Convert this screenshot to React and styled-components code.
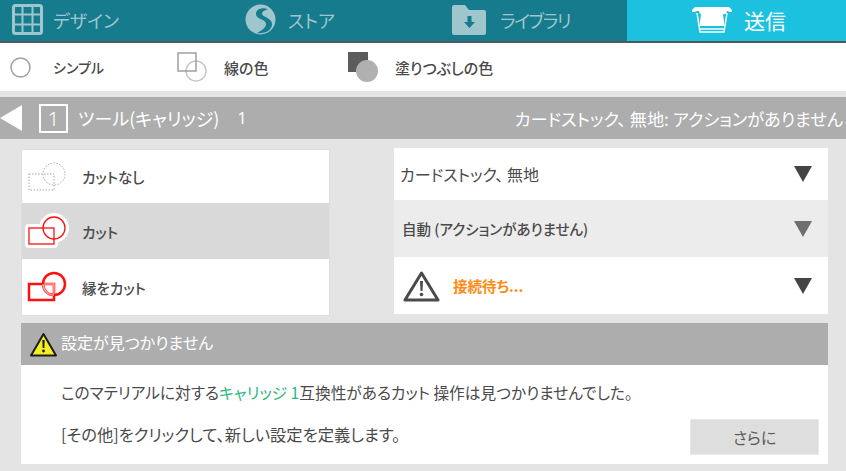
import React from "react"
import styled, { createGlobalStyle } from "styled-components"

const GlobalStyle = createGlobalStyle`
  html, body {
    margin: 0;
    padding: 0;
    background-color: #e4e4e4;
  }

  * {
    box-sizing: border-box;
  }
`

const Page = styled.div`
  width: 846px;
  height: 471px;
  overflow: hidden;
  background-color: #e4e4e4;
  color: #4a4a4a;
  font-family: "Noto Sans CJK JP", "Noto Sans", sans-serif;
  font-feature-settings: "palt";
`

const Tabs = styled.nav`
  display: grid;
  grid-template-columns: 209px 209px 209px 1fr;
  height: 43px;
  background-color: #157b8d;
  border-bottom: 2px solid #4c5a5e;
`

const Tab = styled.div`
  display: flex;
  align-items: center;
  gap: ${({ $gap }) => $gap}px;
  padding-left: ${({ $pad }) => $pad}px;
  padding-bottom: 2px;
  font-size: ${({ $active }) => ($active ? 21 : 18)}px;
  letter-spacing: ${({ $tight }) => ($tight ? "-1.5px" : "0")};
  color: ${({ $active }) => ($active ? "#ffffff" : "#9fc6cd")};
  background-color: ${({ $active }) => ($active ? "#1dc1e0" : "transparent")};
`

const OptionBar = styled.div`
  display: flex;
  align-items: center;
  height: 48px;
  padding-left: 10px;
  background-color: #ffffff;
`

const Option = styled.div`
  display: flex;
  align-items: center;
  gap: ${({ $gap }) => $gap}px;
  width: ${({ $width }) => $width}px;
  font-size: ${({ $size }) => $size}px;
  font-weight: 500;
`

const ToolBar = styled.div`
  display: flex;
  align-items: center;
  height: 42px;
  margin-top: 6px;
  background-color: #adadad;
  color: #ffffff;
  font-size: 18px;
`

const BackArrow = styled.div`
  width: 0;
  height: 0;
  border-style: solid;
  border-width: 13px 22px 13px 0;
  border-color: transparent #ffffff transparent transparent;
`

const ToolNumber = styled.div`
  display: flex;
  align-items: center;
  justify-content: center;
  width: 29px;
  height: 29px;
  margin: 0 10px 0 17px;
  border: 2px solid #ffffff;
  font-family: "Noto Sans", sans-serif;
  font-size: 20px;
  font-weight: 300;
`

const ToolCount = styled.span`
  margin-left: 18px;
  font-family: "Noto Sans", sans-serif;
  font-size: 16px;
`

const ToolStatus = styled.span`
  margin-left: auto;
  padding-right: 3px;
  font-size: 17.2px;
`

const Columns = styled.div`
  display: flex;
  justify-content: space-between;
  align-items: flex-start;
  padding: 9px 18px 0 21px;
`

const CutList = styled.div`
  width: 309px;
  height: 167px;
  margin-top: 1px;
  background-color: #ffffff;
  border: 1px solid #dedede;
`

const CutRow = styled.div`
  display: flex;
  align-items: center;
  gap: 13px;
  height: ${({ $height }) => $height}px;
  padding-left: 3px;
  font-size: 14.5px;
  font-weight: 500;
  background-color: ${({ $selected }) => ($selected ? "#d9d9d9" : "#ffffff")};
`

const Settings = styled.div`
  width: 434px;
`

const SettingRow = styled.div`
  display: flex;
  align-items: center;
  height: ${({ $height }) => $height}px;
  padding: 0 16px 0 ${({ $pad }) => $pad}px;
  font-size: ${({ $size }) => $size}px;
  font-weight: ${({ $weight }) => $weight};
  background-color: ${({ $muted }) => ($muted ? "#ececec" : "#ffffff")};
`

const Caret = styled.div`
  width: 0;
  height: 0;
  margin-left: auto;
  border-style: solid;
  border-width: 16px 9.5px 0 9.5px;
  border-color: ${({ $muted }) => ($muted ? "#6f6f6f" : "#444444")} transparent transparent transparent;
`

const Waiting = styled.span`
  margin-left: 13px;
  color: #ff8a14;
  font-weight: 700;
  font-size: 14.5px;
`

const Warning = styled.section`
  width: 807px;
  margin: 7px 0 0 21px;
  background-color: #ffffff;
`

const WarningHead = styled.div`
  display: flex;
  align-items: center;
  gap: 4px;
  height: 42px;
  padding-left: 9px;
  background-color: #adadad;
  color: #ffffff;
  font-size: 16px;
`

const WarningTitle = styled.span`
  margin-bottom: 4px;
`

const WarningBody = styled.div`
  display: flex;
  justify-content: space-between;
  align-items: flex-end;
  height: 99px;
  padding: 0 9px 9px 40px;
`

const Messages = styled.div`
  display: flex;
  flex-direction: column;
  gap: 19px;
  padding-bottom: 10px;
`

const Message = styled.p`
  margin: 0;
  line-height: 22px;
  font-size: ${({ $size }) => $size}px;
`

const Highlight = styled.span`
  color: #2cb87c;
`

const MoreButton = styled.button`
  width: 129px;
  height: 36px;
  padding: 0;
  border: 1px solid #e8e8e8;
  background-color: #dedede;
  color: #5a5a5a;
  font-family: inherit;
  font-feature-settings: inherit;
  font-size: 16px;
`

function GridIcon() {
  return (
    <svg width="31" height="31" viewBox="0 0 31 31" fill="none" stroke="#9fc6cd">
      <rect x="1.5" y="1.5" width="28" height="28" rx="2" strokeWidth="3" />
      <path d="M10.5 2v27M20.5 2v27M2 10.5h27M2 20.5h27" strokeWidth="2" />
    </svg>
  )
}

function StoreIcon() {
  return (
    <svg width="31" height="31" viewBox="0 0 31 31">
      <circle cx="15.5" cy="15.5" r="15" fill="#9fc6cd" />
      <path
        d="M23 5c-6-2-12 0-12 5 0 5.500 10 5 10 10 0 4-5 7-9 9 7 1 15-2 15-9 0-6.500-10-6.500-10-10.500 0-2 3-3 6-4.500z"
        fill="#157b8d"
      />
    </svg>
  )
}

function LibraryIcon() {
  return (
    <svg width="35" height="32" viewBox="0 0 35 32">
      <path
        d="M2 1h11l4 5h15a2 2 0 0 1 2 2v21a2 2 0 0 1-2 2H2a2 2 0 0 1-2-2V3a2 2 0 0 1 2-2z"
        fill="#9fc6cd"
      />
      <path d="M15.500 12h4v6h3.500l-5.500 6-5.500-6h3.500z" fill="#157b8d" />
    </svg>
  )
}

function SendIcon() {
  return (
    <svg width="42" height="28" viewBox="0 0 42 28" fill="none">
      <path d="M6 1h30c3 0 5 2 5 5h-3c0-1-1-1-2-1l-1 3H9L8 5C7 5 4 5 4 6H1c0-3 2-5 5-5z" fill="#ffffff" />
      <path d="M10 8h22l1.500 12h-25z" fill="#ffffff" />
      <path d="M6 7l3 19h24l3-19" stroke="#ffffff" strokeWidth="1.500" />
      <path d="M8 23h26" stroke="#ffffff" strokeWidth="1.500" />
    </svg>
  )
}

function LineColorIcon() {
  return (
    <svg width="30" height="30" viewBox="0 0 30 30" fill="none">
      <circle cx="19" cy="19" r="10" stroke="#c8c8c8" strokeWidth="1.500" />
      <rect x="1" y="1" width="18" height="18" stroke="#a0a0a0" strokeWidth="1.500" />
    </svg>
  )
}

function FillColorIcon() {
  return (
    <svg width="30" height="30" viewBox="0 0 30 30">
      <rect x="0" y="0" width="20" height="20" fill="#5c5c5c" />
      <circle cx="19" cy="19" r="11" fill="#b0b0b0" />
    </svg>
  )
}

function CutIcon({ kind }) {
  const stroke = kind === "none" ? "#a8a8a8" : "#ff1010"
  const width = kind === "edge" ? 2.5 : kind === "cut" ? 1.3 : 1
  const dash = kind === "none" ? "1.5 1.5" : undefined

  return (
    <svg width="44" height="38" viewBox="0 0 44 38" fill="none">
      <defs>
        <clipPath id="edge-in-circle">
          <circle cx="29" cy="16" r="10" />
        </clipPath>
        <clipPath id="edge-in-rect">
          <rect x="5" y="16" width="24" height="15" />
        </clipPath>
      </defs>
      {kind === "cut" && (
        <g fill="#ffffff" stroke="#ffffff" strokeWidth="8" strokeLinejoin="round">
          <rect x="4" y="16" width="25" height="16" />
          <circle cx="29" cy="16" r="11" />
        </g>
      )}
      <rect x="4" y="16" width="25" height="16" stroke={stroke} strokeWidth={width} strokeDasharray={dash} />
      <circle cx="29" cy="16" r="11" stroke={stroke} strokeWidth={width} strokeDasharray={dash} />
      {kind === "edge" && (
        <g stroke="#ffffff" strokeWidth="1.5" opacity="0.6">
          <rect x="4" y="16" width="25" height="16" clipPath="url(#edge-in-circle)" />
          <circle cx="29" cy="16" r="11" clipPath="url(#edge-in-rect)" />
        </g>
      )}
    </svg>
  )
}

function AlertIcon() {
  return (
    <svg width="37" height="32" viewBox="0 0 37 32">
      <path d="M18.500 3L35 30H2z" fill="none" stroke="#4a4a4a" strokeWidth="3" strokeLinejoin="round" />
      <path d="M17 11h3l-.5 10h-2z" fill="#4a4a4a" />
      <circle cx="18.500" cy="24.500" r="1.800" fill="#4a4a4a" />
    </svg>
  )
}

function YellowAlertIcon() {
  return (
    <svg width="27" height="25" viewBox="0 0 27 25">
      <path d="M13.500 2L26 23.500H1z" fill="#f2ee1f" stroke="#1c1c1c" strokeWidth="2" strokeLinejoin="round" />
      <path d="M12.300 8h2.400l-.4 8h-1.600z" fill="#1c1c1c" />
      <circle cx="13.500" cy="19" r="1.400" fill="#1c1c1c" />
    </svg>
  )
}

export default function App() {
  return (
    <Page>
      <GlobalStyle />

      <Tabs>
        <Tab $pad={12} $gap={10}>
          <GridIcon />
          デザイン
        </Tab>
        <Tab $pad={36} $gap={12}>
          <StoreIcon />
          ストア
        </Tab>
        <Tab $pad={34} $gap={13} $tight>
          <LibraryIcon />
          ライブラリ
        </Tab>
        <Tab $active $pad={64} $gap={11}>
          <SendIcon />
          送信
        </Tab>
      </Tabs>

      <OptionBar>
        <Option $width={167} $gap={22} $size={14}>
          <svg width="21" height="21" viewBox="0 0 21 21" fill="none">
            <circle cx="10.500" cy="10.500" r="9.500" stroke="#a0a0a0" strokeWidth="1.500" />
          </svg>
          シンプル
        </Option>
        <Option $width={171} $gap={17} $size={15}>
          <LineColorIcon />
          線の色
        </Option>
        <Option $gap={17} $size={15}>
          <FillColorIcon />
          塗りつぶしの色
        </Option>
      </OptionBar>

      <ToolBar>
        <BackArrow />
        <ToolNumber>1</ToolNumber>
        ツール(キャリッジ)
        <ToolCount>1</ToolCount>
        <ToolStatus>カードストック、 無地: アクションがありません</ToolStatus>
      </ToolBar>

      <Columns>
        <CutList>
          <CutRow $height={53}>
            <CutIcon kind="none" />
            カットなし
          </CutRow>
          <CutRow $selected $height={56}>
            <CutIcon kind="cut" />
            カット
          </CutRow>
          <CutRow $height={56}>
            <CutIcon kind="edge" />
            縁をカット
          </CutRow>
        </CutList>

        <Settings>
          <SettingRow $height={52} $pad={6} $size={16} $weight={400}>
            カードストック、 無地
            <Caret />
          </SettingRow>
          <SettingRow $muted $height={57} $pad={8} $size={14.5} $weight={500}>
            自動 (アクションがありません)
            <Caret $muted />
          </SettingRow>
          <SettingRow $height={57} $pad={9} $size={14} $weight={500}>
            <AlertIcon />
            <Waiting>接続待ち...</Waiting>
            <Caret />
          </SettingRow>
        </Settings>
      </Columns>

      <Warning>
        <WarningHead>
          <YellowAlertIcon />
          <WarningTitle>設定が見つかりません</WarningTitle>
        </WarningHead>
        <WarningBody>
          <Messages>
            <Message $size={15.7}>
              このマテリアルに対する<Highlight>キャリッジ 1</Highlight>互換性があるカット 操作は見つかりませんでした。
            </Message>
            <Message $size={16.3}>[その他]をクリックして、新しい設定を定義します。</Message>
          </Messages>
          <MoreButton>さらに</MoreButton>
        </WarningBody>
      </Warning>
    </Page>
  )
}
